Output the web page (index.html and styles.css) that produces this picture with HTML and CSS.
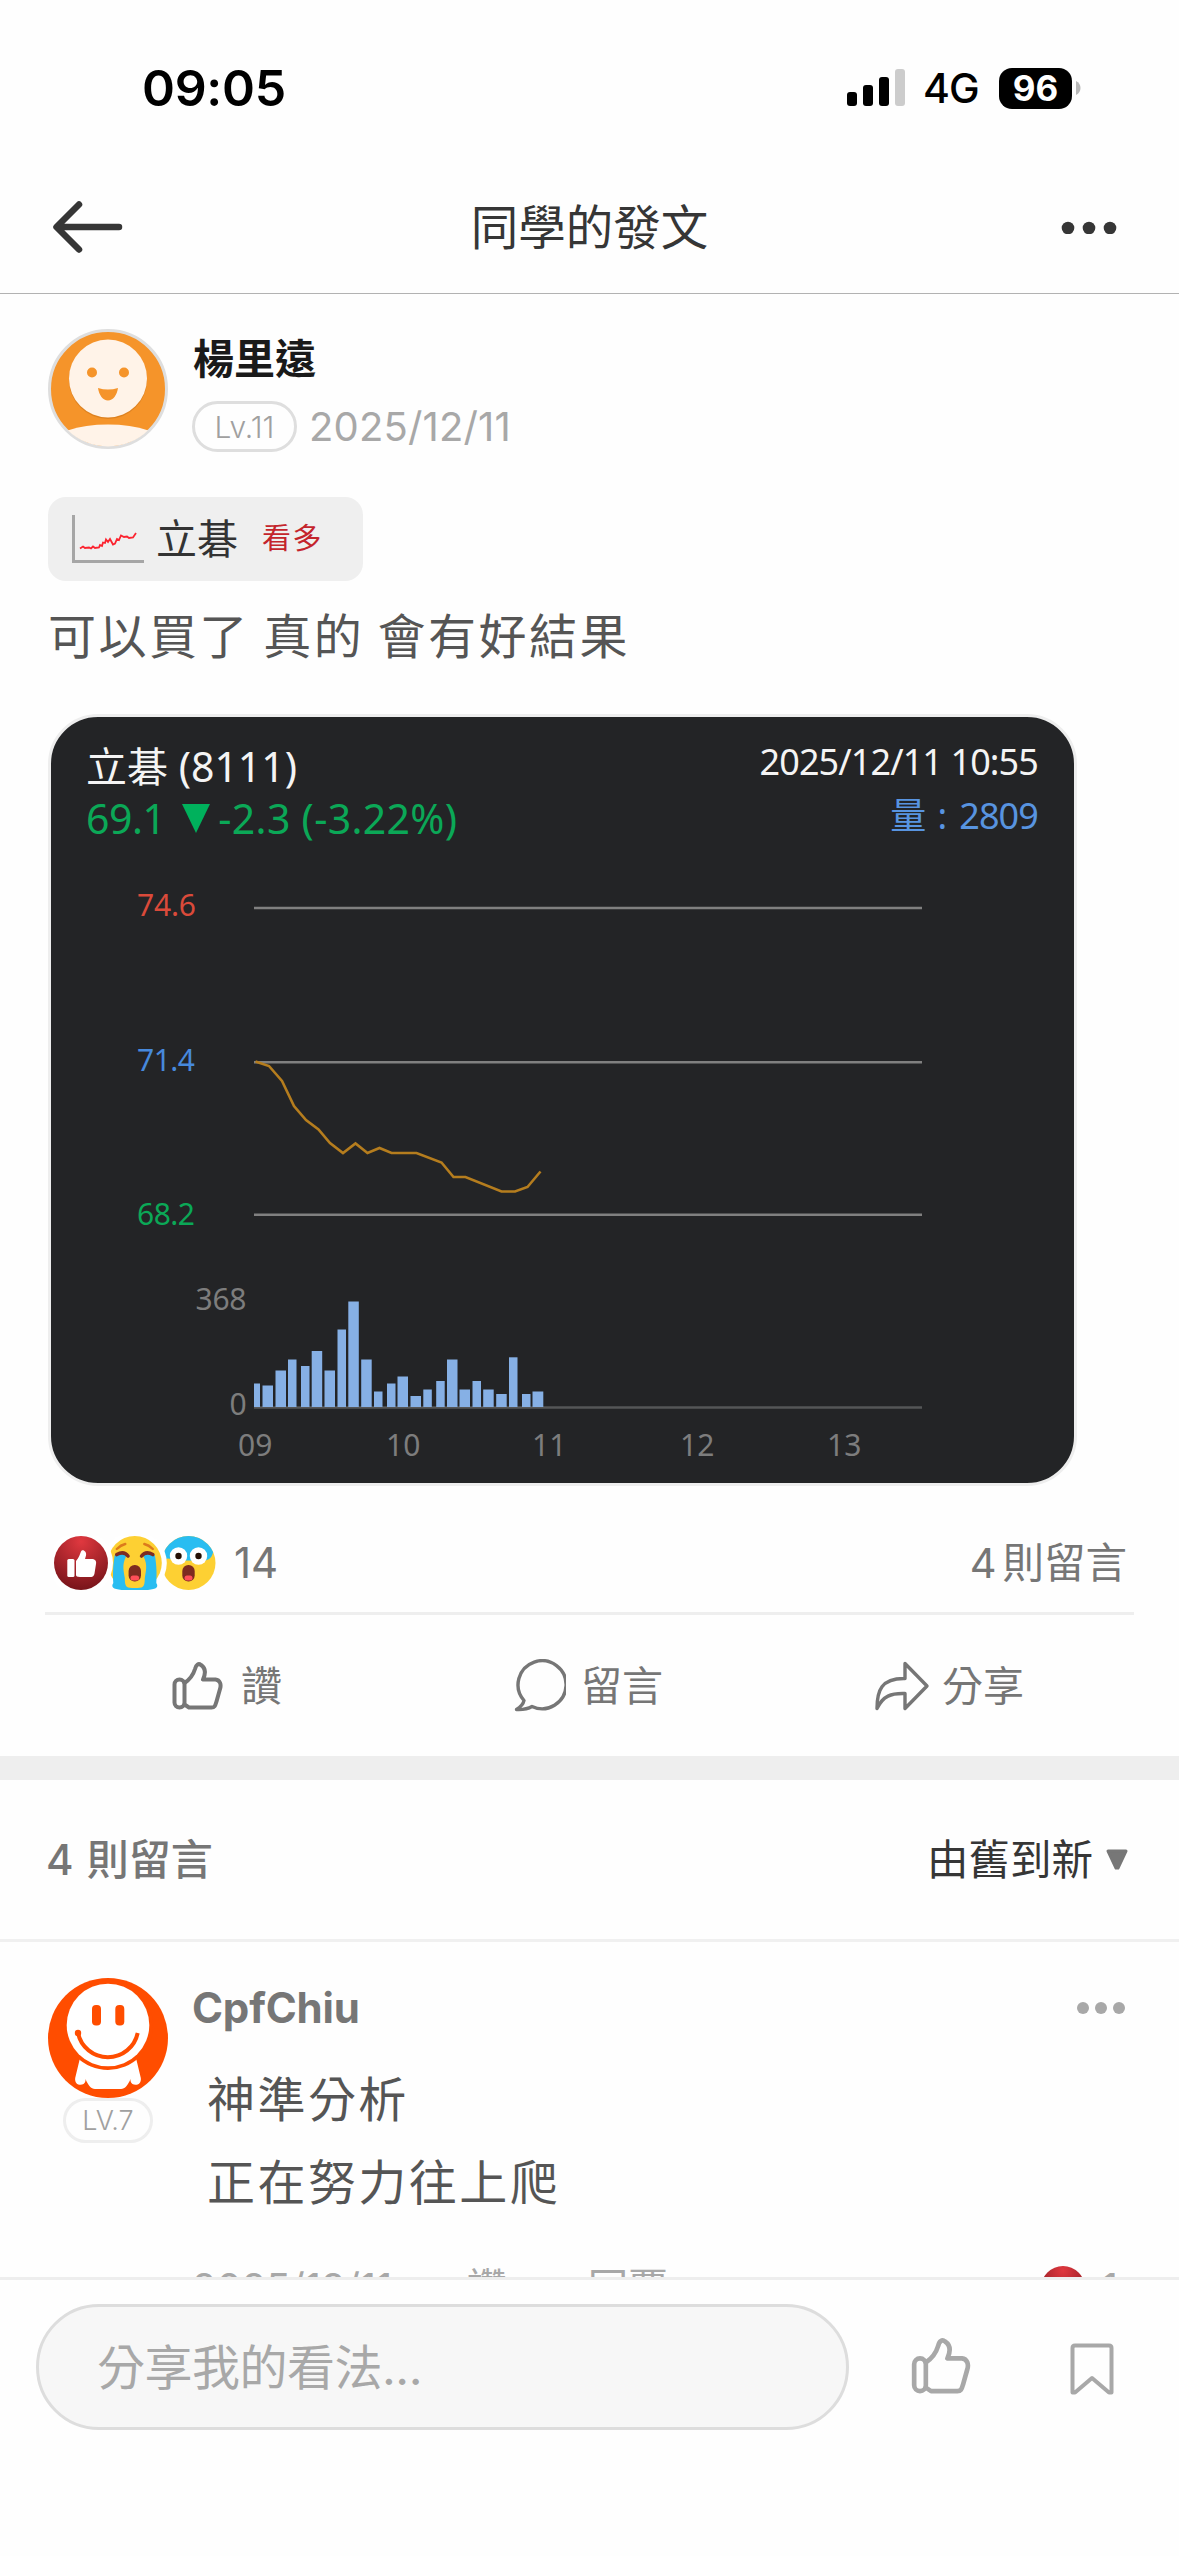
FILE: index.html
```html
<!DOCTYPE html>
<html lang="zh-Hant">
<head>
<meta charset="utf-8">
<title>同學的發文</title>
<link rel="stylesheet" href="styles.css">
</head>
<body>
<svg class="defs" width="0" height="0" aria-hidden="true">
  <symbol id="thumb" viewBox="0 0 50 48">
    <g fill="none" stroke="currentColor" stroke-width="4" stroke-linejoin="round" stroke-linecap="round">
      <rect x="2" y="17.500" width="10" height="28" rx="5"/>
      <path d="M12 21C18 17 21 12 22.500 7C23.500 2.500 26 1 28.500 3C33 6 33.500 11 30.500 17.500H43C47.500 18 49 22.500 47.500 27L44 39.500C42.500 44.500 42 45.500 39 45.500H16.500L12 42.500"/>
    </g>
  </symbol>
  <radialGradient id="red" cx="50%" cy="10%" r="90%">
    <stop offset="0" stop-color="#e0383f"/><stop offset="1" stop-color="#78141a"/>
  </radialGradient>
</svg>
<div class="screen">
  <header class="status">
    <span class="time">09:05</span>
    <div class="status-icons">
      <svg width="58" height="38" viewBox="0 0 58 38"><rect y="23" width="10" height="14" rx="3"/><rect x="16" y="16" width="10" height="21" rx="3"/><rect x="32" y="8" width="10" height="29" rx="3"/><rect x="48" width="10" height="37" rx="3" fill="#ccc"/></svg>
      <span class="net">4G</span>
      <span class="battery">96</span>
      <svg class="nub" width="5" height="14" viewBox="0 0 5 14"><path d="M0 0C6 3 6 11 0 14Z" fill="#b8b8b8"/></svg>
    </div>
  </header>
  <nav class="nav">
    <svg width="70" height="52" viewBox="0 0 70 52"><path d="M26 3.500L3.500 26L26 48.500M4 26H66" fill="none" stroke="#363636" stroke-width="6.500" stroke-linecap="round" stroke-linejoin="round"/></svg>
    <h1 class="title">同學的發文</h1>
    <svg width="56" height="14" viewBox="0 0 56 14" fill="#363636"><circle cx="7" cy="8" r="6.300"/><circle cx="28" cy="8" r="6.300"/><circle cx="49" cy="8" r="6.300"/></svg>
  </nav>
  <main class="feed">
    <article class="post">
      <div class="author">
        <svg width="120" height="120" viewBox="0 0 120 120">
          <defs><clipPath id="av"><circle cx="60" cy="60" r="57.500"/></clipPath></defs>
          <circle cx="60" cy="60" r="58.500" fill="#f5942a" stroke="#dedede" stroke-width="3"/>
          <ellipse cx="60" cy="115" rx="56" ry="19.500" fill="#fff3e8" clip-path="url(#av)"/>
          <circle cx="60" cy="51" r="39" fill="#cf761a" opacity=".6"/>
          <circle cx="60" cy="49.500" r="39" fill="#fff3e8"/>
          <g fill="#f5942a"><circle cx="44" cy="43.500" r="5"/><circle cx="76" cy="43.500" r="5"/><path d="M50 59Q60 62 70 59C69 66 65 71.500 60 71.500S51 66 50 59Z"/></g>
        </svg>
        <div class="who">
          <strong class="name">楊里遠</strong>
          <div class="meta"><span class="level">Lv.11</span><time class="date">2025/12/11</time></div>
        </div>
      </div>
      <div class="tag">
        <svg width="72" height="49" viewBox="0 0 72 49" fill="none"><path d="M1.500 0V46.500H72" stroke="#a6a6a6" stroke-width="3"/><path d="M8 33.500L11 31.500L13 33L17 32.500L19 33.500L21 31.500L23 33L27 32.500L28 30L30 31L31 27.500L33 28L34 24.500L36 27L38 24L41 29.500L43 28.500L45 24L47 25L49 20.500L52 22L55 21.500L57 23L61 22.500L64 18" stroke="#fb2430" stroke-width="1.800"/></svg>
        <span class="tag-name">立碁</span><span class="tag-view">看多</span>
      </div>
      <p class="body">可以買了 真的 會有好結果</p>
      <figure class="card">
        <div class="quote">
          <div>
            <div class="stock">立碁 (8111)</div>
            <div class="price"><span>69.1</span><svg width="28" height="29" viewBox="0 0 28 29"><path d="M0 0H28L14 29Z" fill="#00b15c"/></svg><span class="change">-2.3 (-3.22%)</span></div>
          </div>
          <div class="quote-right">
            <div>2025/12/11 10:55</div>
            <div class="volume"><span>量</span><span class="colon">:</span><span>2809</span></div>
          </div>
        </div>
        <svg class="plot" width="1023" height="633" viewBox="51 850 1023 633">
          <g stroke="#808080" stroke-width="2.600"><path d="M254 908H922M254 1062.300H922M254 1214.700H922"/><path d="M254 1407.500H922" stroke="#555657"/></g>
          <polyline fill="none" stroke="#b57d1e" stroke-width="2.600" points="255.500,1061.500 269,1066 282,1081 294,1106 306,1120 318.500,1129.500 330,1143 343,1153 355.500,1143.500 367.500,1153 379.500,1148 391.500,1153 416.500,1153 441.500,1162.500 453.500,1177 465.500,1177 501.500,1191.500 515,1191.500 527.500,1187 540.500,1171.500"/>
          <g fill="#86b0e5">
            <rect x="254" y="1383.500" width="6" height="23.500"/><rect x="262.500" y="1385.500" width="10.500" height="21.500"/><rect x="275.500" y="1370.500" width="10.500" height="36.500"/><rect x="288" y="1359.500" width="8.500" height="47.500"/><rect x="301" y="1366" width="8.500" height="41"/><rect x="311.700" y="1351" width="10.500" height="56"/><rect x="324.500" y="1370.500" width="10.500" height="36.500"/><rect x="337.500" y="1329.500" width="8.500" height="77.500"/><rect x="348.300" y="1301.500" width="10.500" height="105.500"/><rect x="361.200" y="1359.500" width="10.500" height="47.500"/><rect x="374" y="1391.500" width="8.500" height="15.500"/><rect x="387" y="1383.500" width="8.500" height="23.500"/><rect x="397.500" y="1376.500" width="10.500" height="30.500"/><rect x="410.500" y="1396" width="10.500" height="11"/><rect x="423.300" y="1389.500" width="8.500" height="17.500"/><rect x="436.200" y="1381" width="8.500" height="26"/><rect x="447" y="1359.500" width="10.500" height="47.500"/><rect x="459.500" y="1389.500" width="10.500" height="17.500"/><rect x="472.500" y="1381" width="8.500" height="26"/><rect x="483.200" y="1389.500" width="10.500" height="17.500"/><rect x="496.200" y="1394" width="10.500" height="13"/><rect x="509" y="1357.300" width="8.500" height="49.700"/><rect x="522" y="1394" width="8.500" height="13"/><rect x="532.500" y="1391.500" width="10.800" height="15.500"/>
          </g>
          <g class="ticks">
            <text x="137" y="915.500" textLength="59" fill="#da4a3a">74.6</text>
            <text x="137" y="1070.500" textLength="58" fill="#4789dc">71.4</text>
            <text x="137" y="1224.500" textLength="58" fill="#0ba857">68.2</text>
            <g fill="#7d7d7d">
              <text x="195.500" y="1310" textLength="51">368</text><text x="229.500" y="1415">0</text>
              <text x="238" y="1456" textLength="34.500">09</text><text x="386" y="1456" textLength="34.500">10</text><text x="532" y="1456" textLength="34.500">11</text><text x="680" y="1456" textLength="34.500">12</text><text x="827" y="1456" textLength="34.500">13</text>
            </g>
          </g>
        </svg>
      </figure>
      <div class="stats">
        <svg width="162" height="54" viewBox="0 0 162 54">
          <defs><clipPath id="face"><circle r="27"/></clipPath></defs>
          <g transform="translate(134.500 27)">
            <circle r="27" fill="#fdd033"/>
            <path d="M-28 -28H24.500C26.500 -12 25 -3 15 -2.500H-13C-19 -4 -22 -7 -28 0Z" fill="#29bdf1" clip-path="url(#face)"/>
            <circle cx="-10" cy="-7" r="8.700" fill="#fff"/><circle cx="10" cy="-7" r="8.700" fill="#fff"/>
            <circle cx="-10" cy="-7" r="3.200" fill="#241005"/><circle cx="10" cy="-7" r="3.200" fill="#241005"/>
            <rect x="-6.200" y="2" width="12.400" height="16.500" rx="6" fill="#7d2b20"/><rect x="-4" y="12.500" width="8" height="5" rx="2.500" fill="#ff4f58"/>
          </g>
          <circle cx="80.800" cy="27" r="32" fill="#fff"/>
          <g transform="translate(80.800 27)">
            <circle r="27" fill="#fdd033"/>
            <path d="M-20 -8C-13 -12 -8 -8 -9 -6C-13 2 -11 8 -10 15C-10 25 -8 25 0 25S10 25 10 15C11 8 13 2 9 -6C8 -8 13 -12 20 -8C22 3 22 12 21.500 20C25 25 19 27 10 27H-10C-19 27 -25 25 -21.500 20C-22 12 -22 3 -20 -8Z" fill="#29bdf1"/>
            <g fill="none" stroke-linecap="round"><path d="M-18 -14Q-14 -18 -9.500 -19M18 -14Q14 -18 9.500 -19" stroke="#dc7a1c" stroke-width="2.400"/><path d="M-18 -8.500Q-11 -12.500 -6.800 -7M18 -8.500Q11 -12.500 6.800 -7" stroke="#7d2b20" stroke-width="3.600"/></g>
            <rect x="-6.200" y="2" width="12.400" height="16.500" rx="6" fill="#7d2b20"/><rect x="-4.300" y="12.500" width="8.600" height="5" rx="2.500" fill="#ff4f58"/>
          </g>
          <circle cx="27" cy="27" r="32" fill="#fff"/>
          <circle cx="27" cy="27" r="27" fill="url(#red)"/>
          <g fill="#fff"><rect x="13.300" y="23" width="7.200" height="18" rx="1.500"/><path d="M22 25C25 22 26 18 27 15.500C28.500 12.500 33 15.500 32 19.500L31 23H38.500C42 23.500 42.500 26 42 28L40.500 37.500C40 40.500 38 41 36 41H26C23 41 22 40 22 39Z"/></g>
        </svg>
        <span class="count">14</span>
        <span class="replies"><span>4</span><span>則留言</span></span>
      </div>
      <div class="actions">
        <div class="action like"><svg width="51" height="48"><use href="#thumb"/></svg><span>讚</span></div>
        <div class="action reply"><svg width="53" height="53" viewBox="0 0 53 53"><path d="M11 41.500A24 24 0 1 1 19 47.500Q13 51 3.500 50.500Q10 46.500 11 41.500Z" fill="none" stroke="#767676" stroke-width="3.400" stroke-linejoin="round"/></svg><span>留言</span></div>
        <div class="action share"><svg width="55" height="50" viewBox="0 0 55 50"><path d="M30 2.500L52 25L30 47.500V32.500C16 32 8 35 2 47.500C2 30 6 17 30 17.500Z" fill="none" stroke="#767676" stroke-width="3.400" stroke-linejoin="round"/></svg><span>分享</span></div>
      </div>
    </article>
    <section class="comments">
      <div class="comments-head">
        <h2 class="total">4 則留言</h2>
        <div class="sort"><span>由舊到新</span><svg width="22" height="21" viewBox="0 0 22 21"><path d="M2 2H20L12 19H10Z" fill="#777" stroke="#777" stroke-width="3" stroke-linejoin="round"/></svg></div>
      </div>
      <div class="comment">
        <div class="side">
          <svg width="120" height="120" viewBox="0 0 120 120">
            <circle cx="60" cy="60" r="60" fill="#ff4d00"/>
            <path d="M32 80L27.200 100C26 108 36 109 37.500 103V101C40 107 43 111 47 111H73C77 111 80 107 82.500 101V103C84 109 94 108 92.800 100L88 80Z" fill="#fff"/>
            <circle cx="60" cy="47" r="45" fill="#ff4d00"/><circle cx="60" cy="47" r="41.300" fill="#fff"/>
            <g fill="#ff4d00"><rect x="44" y="27" width="9" height="20.500" rx="4"/><rect x="67.300" y="27" width="9" height="20.500" rx="4"/><circle cx="30" cy="55" r="3.200"/></g>
            <path d="M30 55A30.500 30.500 0 0 0 89.700 55" fill="none" stroke="#ff4d00" stroke-width="4"/>
          </svg>
          <span class="level small">LV.7</span>
        </div>
        <div class="content">
          <div class="comment-top"><strong class="user">CpfChiu</strong><svg width="50" height="12" viewBox="0 0 50 12" fill="#a8a8a8"><circle cx="7" cy="6" r="6"/><circle cx="25" cy="6" r="6"/><circle cx="43" cy="6" r="6"/></svg></div>
          <p class="message">神準分析<br>正在努力往上爬</p>
          <div class="foot"><span class="foot-date">2025/12/11</span><span class="foot-like">讚</span><span>回覆</span><svg class="dot" width="44" height="44" viewBox="0 0 44 44"><circle cx="22" cy="22" r="22" fill="url(#red)"/></svg><span class="foot-count">1</span></div>
        </div>
      </div>
    </section>
  </main>
  <footer class="bar">
    <div class="input">分享我的看法...</div>
    <svg class="bar-thumb" width="60" height="56"><use href="#thumb"/></svg>
    <svg width="44" height="52" viewBox="0 0 44 52"><path d="M2.500 5Q2.500 2.500 5 2.500H39Q41.500 2.500 41.500 5V49.500H39L22 35L5 49.500H2.500Z" fill="none" stroke="#a8a8a8" stroke-width="4" stroke-linejoin="round"/></svg>
  </footer>
</div>
</body>
</html>
```
FILE: styles.css
```css
* { box-sizing: border-box; }
body, h1, h2, p, figure { margin: 0; }
body { background: #fefefe; font-family: Inter, "Noto Sans CJK TC", sans-serif; line-height: 60px; }
svg { display: block; flex: none; }
.defs { position: absolute; }
.screen { width: 1179px; height: 2556px; display: flex; flex-direction: column; overflow: hidden; white-space: nowrap; }

.status { flex: none; height: 160px; padding: 16px 98px 0 142px; display: flex; align-items: center; justify-content: space-between; color: #000; }
.time { font-size: 50px; font-weight: 600; letter-spacing: -.3px; }
.status-icons { display: flex; align-items: center; }
.net { margin-left: 18px; font-size: 41px; font-weight: 500; line-height: 42px; width: 76px; letter-spacing: -1px; }
.battery { width: 73px; height: 41px; border-radius: 13px; background: #000; color: #fff; font-size: 35px; line-height: 41px; font-weight: 700; text-align: center; }
.nub { margin-left: 4px; }

.nav { flex: none; height: 134px; padding: 0 62px 0 53px; display: flex; align-items: center; justify-content: space-between; border-bottom: 1px solid #b2b2b2; }
.title { margin-right: 5px; padding-top: 2px; font-size: 47.500px; font-weight: 400; color: #363636; }

.feed { flex: 1; min-height: 0; overflow: hidden; }
.post { padding: 35px 45px 0; }
.author { display: flex; gap: 24px; height: 120px; padding-left: 3px; }
.who { display: flex; flex-direction: column; }
.name { padding-left: 1px; font-size: 41px; font-weight: 700; color: #1a1a1a; }
.meta { display: flex; align-items: center; gap: 12px; margin-top: 12px; }
.level { width: 105px; height: 51px; border: 3px solid #dedede; border-radius: 26px; font-size: 30px; line-height: 46px; color: #a0a0a0; text-align: center; font-weight: 300; }
.date { font-size: 40px; color: #a8a8a8; line-height: 51px; letter-spacing: .15px; }

.tag { width: 315px; height: 84px; margin: 48px 0 0 3px; padding-left: 24px; border-radius: 18px; background: #efefef; display: flex; align-items: center; }
.tag-name { margin-left: 12px; font-size: 41px; color: #333; }
.tag-view { margin-left: 24px; font-size: 29px; letter-spacing: 1.500px; color: #c4242c; }
.body { margin: 19px 0 0 3px; font-size: 48px; line-height: 74px; height: 72px; letter-spacing: 2.450px; word-spacing: -2.500px; color: #555; }

.card { width: 1029px; height: 772px; margin: 42px 0 0 3px; border: 3px solid #eee; border-radius: 50px; background: #232426; overflow: hidden; font-family: "Noto Sans", "Noto Sans CJK TC", sans-serif; }
.quote { height: 133px; padding: 22px 36px 0 35px; display: flex; justify-content: space-between; color: #f4f4f4; font-size: 41px; line-height: 54px; }
.price { display: flex; align-items: center; color: #0ba857; line-height: 51px; }
.price svg { margin: 0 8px 0 17px; }
.change { letter-spacing: .3px; }
.price span:first-child { letter-spacing: -.5px; }
.quote-right { margin-top: -4px; font-size: 36px; text-align: right; letter-spacing: -.9px; }
.volume { display: flex; justify-content: flex-end; color: #5894e0; }
.colon { margin: 0 13px 0 12px; }
.ticks { font-size: 30px; }

.stats { height: 126px; padding: 28px 7px 0 9px; display: flex; align-items: center; font-size: 42px; color: #767676; }
.count { margin-left: 18px; }
.replies { margin-left: auto; display: flex; gap: 6px; font-size: 41.500px; }
.actions { height: 144px; border-top: 3px solid #eee; display: flex; color: #767676; font-size: 41px; }
.action { display: flex; align-items: center; }
.like { width: 468px; padding-left: 127px; gap: 18px; }
.reply { width: 362px; gap: 15px; }
.share { gap: 12px; }

.comments { border-top: 24px solid #eee; }
.comments-head { height: 162px; padding: 0 51px 0 46px; border-bottom: 3px solid #f0f0f0; display: flex; align-items: center; justify-content: space-between; }
.total { font-size: 42px; font-weight: 500; color: #767676; word-spacing: 2px; }
.sort { display: flex; align-items: center; gap: 13px; font-size: 41.500px; color: #363636; }
.comment { display: flex; gap: 24px; padding: 36px 51px 0 48px; }
.side { width: 120px; flex: none; }
.small { display: block; width: 90px; height: 45px; margin: 0 auto; font-size: 27px; line-height: 39px; border-color: #eee; }
.content { flex: 1; }
.comment-top { height: 60px; padding-right: 2px; display: flex; align-items: center; justify-content: space-between; }
.user { font-size: 42px; font-weight: 700; color: #767676; letter-spacing: -.2px; }
.message { margin: 20px 0 0 15px; font-size: 48px; line-height: 83px; letter-spacing: 2.450px; color: #555; }
.foot { display: flex; align-items: center; margin-top: 34px; font-size: 40px; color: #a8a8a8; }
.foot-date { width: 275px; }
.foot-like { width: 121px; }
.dot { margin: 0 17px 0 auto; }
.foot-count { margin-right: 10px; }

.bar { flex: none; height: 279px; padding: 24px 65px 0 36px; border-top: 3px solid #eee; display: flex; align-items: flex-start; color: #a8a8a8; }
.input { width: 813px; height: 126px; padding-left: 58px; border: 3px solid #ddd; border-radius: 63px; background: #f7f7f7; font-size: 48px; line-height: 122px; letter-spacing: -.5px; }
.bar svg { margin-top: 39px; }
.bar .bar-thumb { margin: 34px auto 0 62px; }
```
